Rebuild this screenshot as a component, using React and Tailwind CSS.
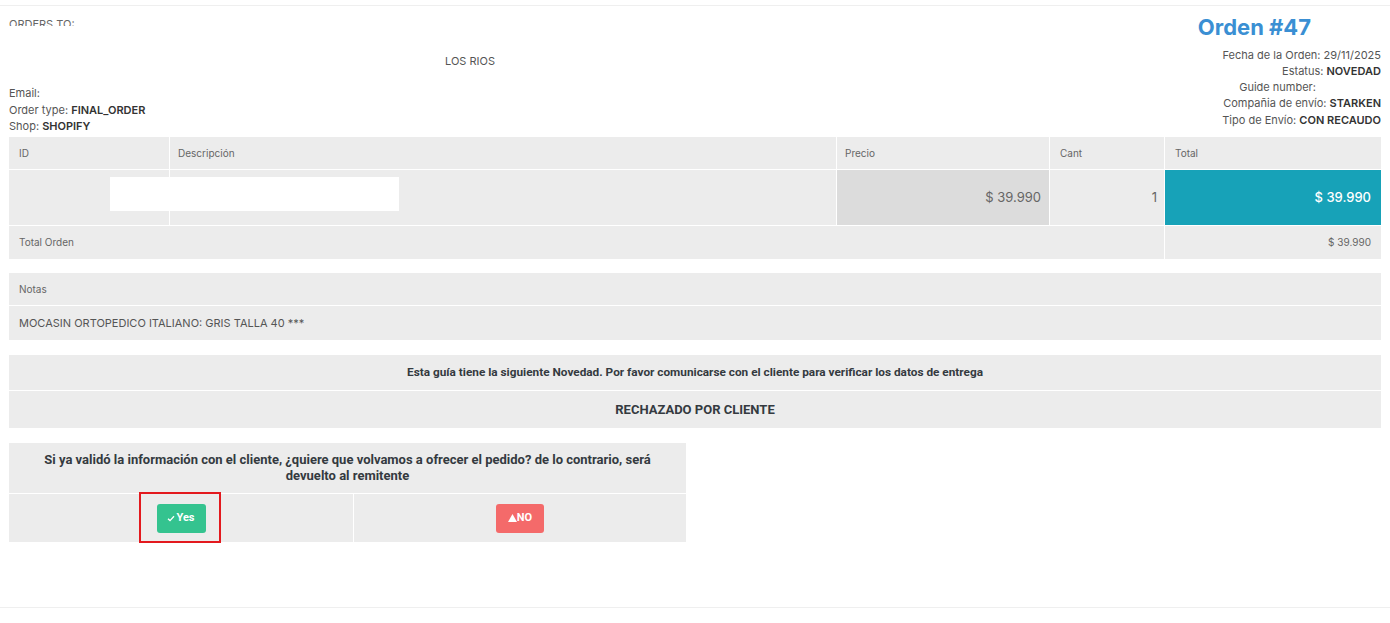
import React from "react";

const inter = { fontFamily: "Inter, 'Liberation Sans', sans-serif" };
const roboto = { fontFamily: "Roboto, 'Liberation Sans', sans-serif" };

export default function App() {
  return (
    <div className="w-[1390px] h-[623px] bg-white pt-[5px] text-[#555]" style={inter}>
      <div className="border-y border-[#efefef] px-[9px] pb-[65px]">
        {/* header */}
        <div className="flex h-[131px]">
          <div className="w-[922px] text-[11px] leading-[16.5px]">
            <div className="h-[20px] overflow-hidden pt-[10px] text-[#666]">ORDERS TO:</div>
            <div className="mt-[27px] text-center">LOS RIOS</div>
            <div className="mt-[15.5px]">Email:</div>
            <div>
              Order type: <b className="font-semibold text-[#333]">FINAL_ORDER</b>
            </div>
            <div>
              Shop: <b className="font-semibold text-[#333]">SHOPIFY</b>
            </div>
          </div>
          <div className="flex-1 text-right text-[11px] leading-[16.25px]">
            <div className="mt-[7px] pr-[70px] text-[22px] font-bold leading-[28px] text-[#3a8fd3]">Orden #47</div>
            <div className="mt-[5.5px]">Fecha de la Orden: 29/11/2025</div>
            <div>
              Estatus: <b className="font-semibold text-[#333]">NOVEDAD</b>
            </div>
            <div>
              Guide number: <span className="inline-block w-[62px]" />
            </div>
            <div>
              Compañia de envío: <b className="font-semibold text-[#333]">STARKEN</b>
            </div>
            <div>
              Tipo de Envío: <b className="font-semibold text-[#333]">CON RECAUDO</b>
            </div>
          </div>
        </div>

        {/* products table */}
        <div className="relative grid grid-cols-[160px_666px_212px_114px_216px] gap-px bg-white text-[10px] text-[#666]">
          <div className="flex h-[32px] items-center bg-[#ececec] pl-[10px]">ID</div>
          <div className="flex items-center bg-[#ececec] pl-[8px]">Descripción</div>
          <div className="flex items-center bg-[#ececec] pl-[8px]">Precio</div>
          <div className="flex items-center bg-[#ececec] pl-[10px]">Cant</div>
          <div className="flex items-center bg-[#ececec] pl-[10px]">Total</div>

          <div className="h-[55px] bg-[#ececec]" />
          <div className="bg-[#ececec]" />
          <div className="flex items-center justify-end bg-[#dcdcdc] pr-[8px] text-[13px] text-[#666]">$ 39.990</div>
          <div className="flex items-center justify-end bg-[#ececec] pr-[7px] text-[13px] text-[#666]">1</div>
          <div className="flex items-center justify-end bg-[#17a2b8] pr-[10px] text-[13px] font-medium text-white">$ 39.990</div>

          <div className="col-span-4 flex h-[33px] items-center bg-[#ececec] pl-[10px]">Total Orden</div>
          <div className="flex items-center justify-end bg-[#ececec] pr-[10px]">$ 39.990</div>

          <div className="absolute left-[101px] top-[40px] h-[34px] w-[289px] bg-white" />
        </div>

        {/* notes */}
        <div className="mt-[14px] flex flex-col gap-px bg-white">
          <div className="flex h-[32px] items-center bg-[#ececec] pl-[10px] text-[10px] text-[#666]">Notas</div>
          <div className="flex h-[34px] items-center bg-[#ececec] pl-[10px] text-[11px] text-[#555]">
            MOCASIN ORTOPEDICO ITALIANO: GRIS TALLA 40 ***
          </div>
        </div>

        {/* novedad */}
        <div className="mt-[15px] flex flex-col gap-px bg-white font-bold text-[#343a40]" style={roboto}>
          <div className="flex h-[35px] items-center justify-center bg-[#ececec] text-[11.8px]">
            Esta guía tiene la siguiente Novedad. Por favor comunicarse con el cliente para verificar los datos de entrega
          </div>
          <div className="flex h-[37px] items-center justify-center bg-[#ececec] text-[13px]">RECHAZADO POR CLIENTE</div>
        </div>

        {/* question */}
        <div className="relative mt-[15px] grid w-[677px] grid-cols-[344px_332px] gap-px bg-white" style={roboto}>
          <div className="col-span-2 flex h-[50px] items-center justify-center bg-[#ececec] px-[16px] text-center text-[13px] font-bold leading-[16px] text-[#343a40]">
            Si ya validó la información con el cliente, ¿quiere que volvamos a ofrecer el pedido? de lo contrario, será devuelto al remitente
          </div>
          <div className="flex h-[48px] items-center justify-center bg-[#ececec]">
            <button className="flex h-[29px] w-[49px] items-center justify-center rounded-[3px] bg-[#34c38f] text-[11px] font-bold text-white">
              <svg width="8" height="7" viewBox="0 0 8 7" className="mr-[1px]">
                <path d="M1 3.8 L3 5.6 L7 1.2" fill="none" stroke="white" strokeWidth="1.3" />
              </svg>
              Yes
            </button>
          </div>
          <div className="flex items-center justify-center bg-[#ececec]">
            <button className="flex h-[29px] w-[48px] items-center justify-center rounded-[3px] bg-[#f46a6a] text-[11px] font-bold text-white">
              <svg width="9" height="8" viewBox="0 0 9 8">
                <path d="M4.5 0 L9 8 L0 8 Z" fill="white" />
              </svg>
              NO
            </button>
          </div>
          <div className="pointer-events-none absolute left-[130px] top-[49px] h-[51px] w-[82px] border-2 border-[#e3191e]" />
        </div>
      </div>
    </div>
  );
}
